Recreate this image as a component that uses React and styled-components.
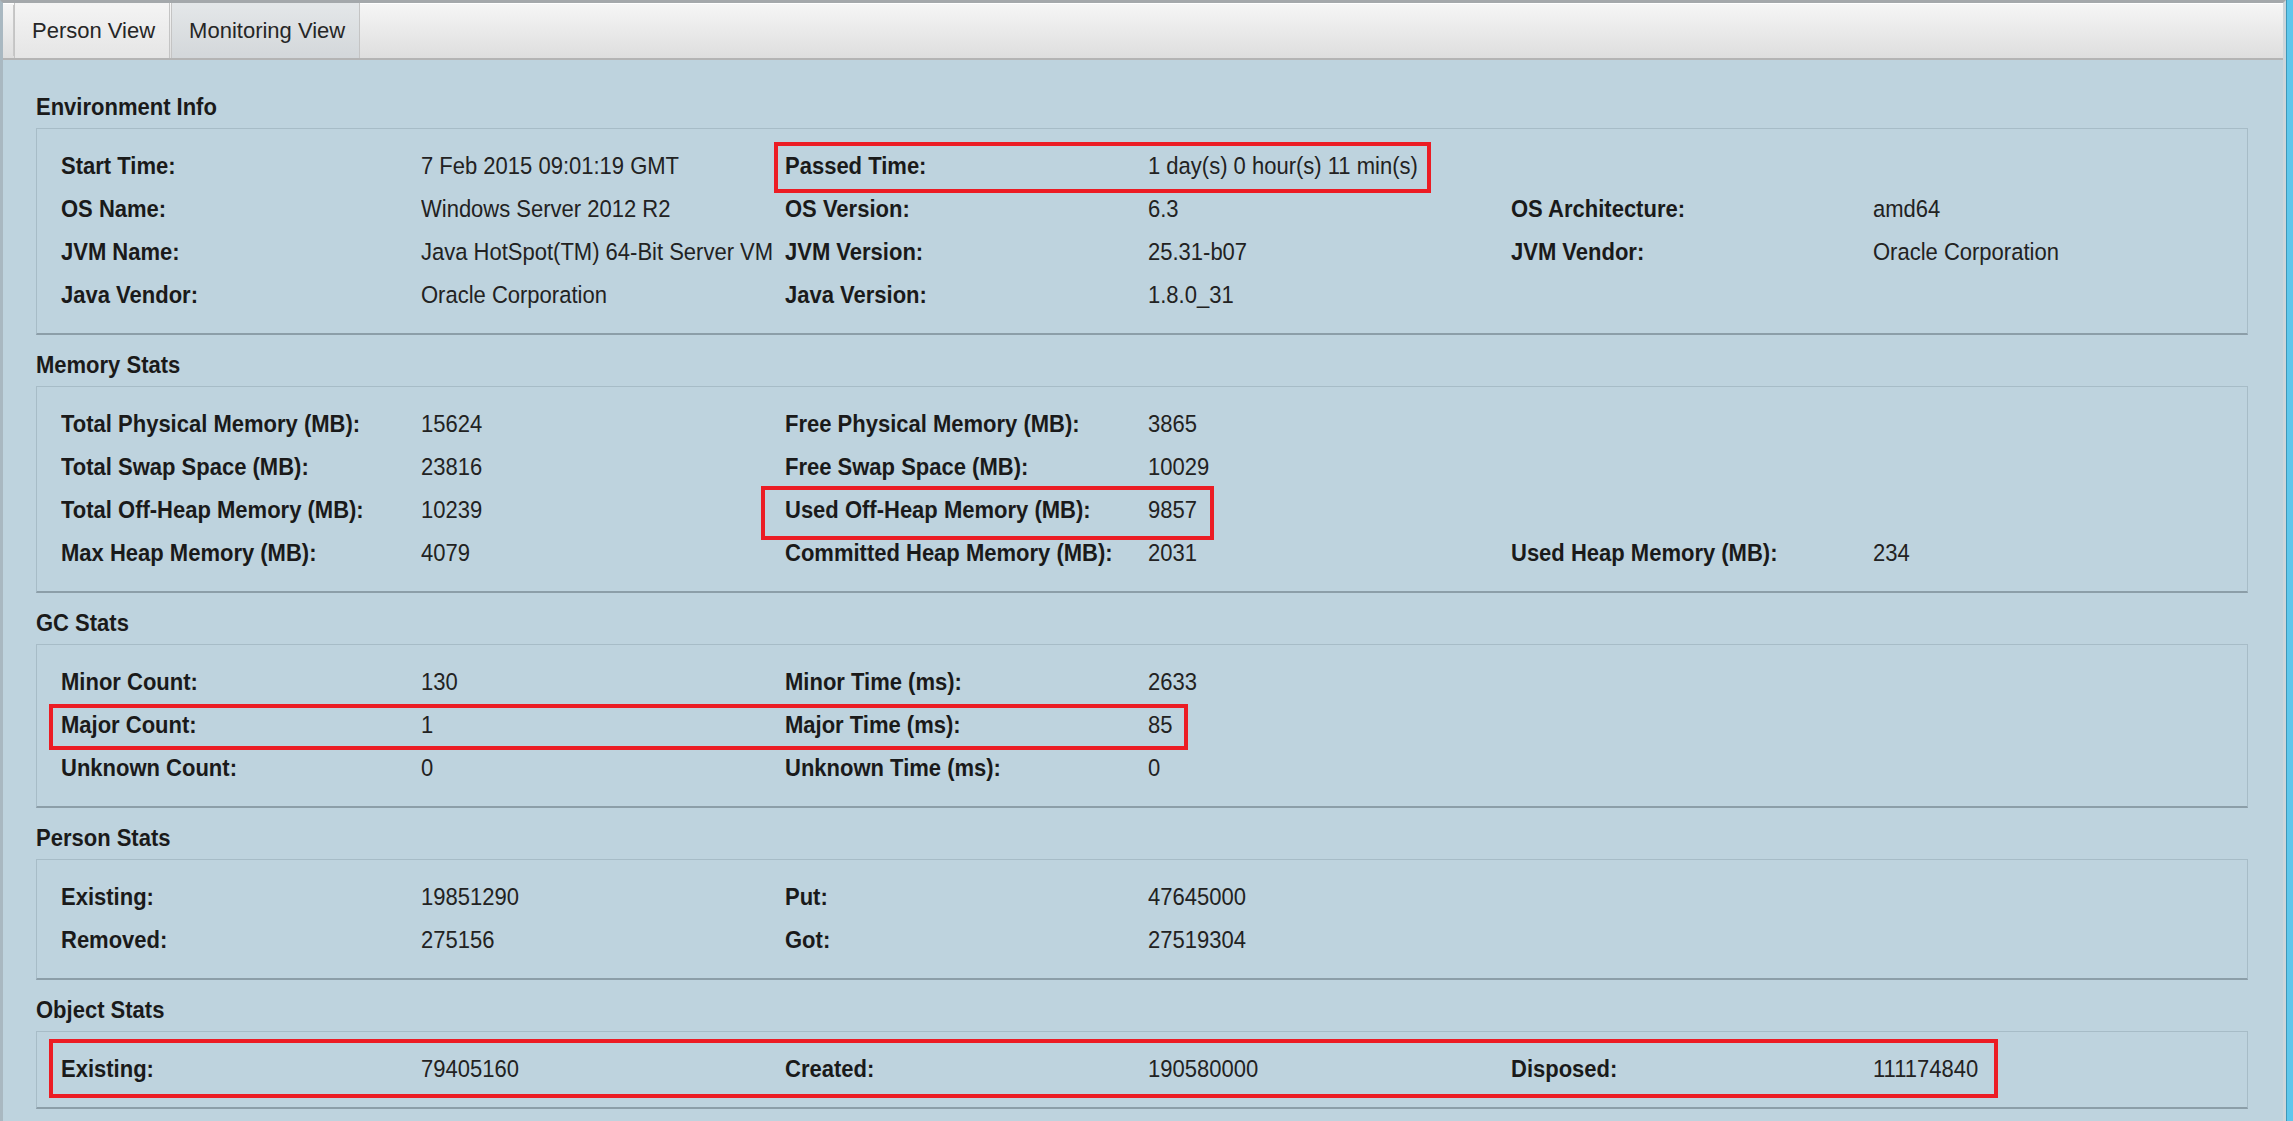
import styled, { createGlobalStyle } from "styled-components";

const GlobalStyle = createGlobalStyle`
  html, body {
    margin: 0;
    padding: 0;
    background: #bed3de;
  }
  body {
    font-family: "Liberation Sans", Arial, sans-serif;
    color: #1c1c1c;
  }
`;

const Janela = styled.div`
  display: flex;
  width: 2293px;
  height: 1121px;
  overflow: hidden;
`;

const Principal = styled.div`
  flex: 1;
  display: flex;
  flex-direction: column;
  background: #bed3de;
  border-left: 3px solid #a9b8c1;
  border-right: 3px solid #cdd6db;
  border-top: 3px solid #a4a8ab;
`;

const BordaJanela = styled.div`
  width: 7px;
  background: linear-gradient(to right, #3f97b8 0, #3f97b8 1px, #5ec7ec 1px);
`;

const BarraAbas = styled.div`
  height: 55px;
  display: flex;
  padding-left: 8px;
  background: linear-gradient(#f6f6f6, #dedede);
  border-bottom: 2px solid #b4b4b4;
  box-shadow: inset 0 1px 0 #ffffff;
`;

const Aba = styled.div`
  display: flex;
  align-items: center;
  padding: 0 14px 0 17px;
  font-size: 22px;
  color: #262626;
  border-left: 1px solid #c4c4c4;
  border-right: 1px solid #c4c4c4;
  margin-right: 1px;
  background: ${(p) =>
    p.$ativa
      ? "linear-gradient(#e4e7e9, #d3d7da)"
      : "linear-gradient(#f4f4f4, #e5e5e5)"};
  &:first-child {
    margin-left: 3px;
    box-shadow: -3px 0 0 -2px #c8c8c8;
  }
`;

const Conteudo = styled.div`
  display: flex;
  flex-direction: column;
  gap: 18px;
  padding: 35px 35px 0 33px;
`;

const Secao = styled.section`
  display: flex;
  flex-direction: column;
`;

const TituloSecao = styled.div`
  font-size: 22px;
  font-weight: bold;
  line-height: 26px;
  height: 26px;
  margin-bottom: 7px;
  color: #1a1a1a;
  transform: scaleY(1.07);
  transform-origin: left center;
`;

const Painel = styled.div`
  border: 1px solid #a7bcc7;
  border-bottom: 2px solid #8c9ea8;
  padding: 16px 0 16px 24px;
`;

const Linha = styled.div`
  position: relative;
  display: grid;
  grid-template-columns: 360px 364px 363px 363px 362px 1fr;
  height: 43px;
  align-items: center;
`;

const Rotulo = styled.span`
  justify-self: start;
  display: inline-block;
  font-size: 22px;
  font-weight: bold;
  color: #1a1a1a;
  white-space: nowrap;
  transform: scaleY(1.07);
`;

const Valor = styled.span`
  justify-self: start;
  display: inline-block;
  font-size: 22px;
  color: #222;
  white-space: nowrap;
  transform: scaleY(1.07);
`;

const Destaque = styled.div`
  position: absolute;
  left: ${(p) => p.$x}px;
  top: ${(p) => p.$y}px;
  width: ${(p) => p.$w}px;
  height: ${(p) => p.$h}px;
  border: 4px solid #ec1c24;
  box-sizing: border-box;
  pointer-events: none;
`;

const secoes = [
  {
    titulo: "Environment Info",
    linhas: [
      {
        itens: [
          ["Start Time:", "7 Feb 2015 09:01:19 GMT"],
          ["Passed Time:", "1 day(s) 0 hour(s) 11 min(s)"],
        ],
        destaque: { x: 713, y: -3, w: 657, h: 51 },
      },
      {
        itens: [
          ["OS Name:", "Windows Server 2012 R2"],
          ["OS Version:", "6.3"],
          ["OS Architecture:", "amd64"],
        ],
      },
      {
        itens: [
          ["JVM Name:", "Java HotSpot(TM) 64-Bit Server VM"],
          ["JVM Version:", "25.31-b07"],
          ["JVM Vendor:", "Oracle Corporation"],
        ],
      },
      {
        itens: [
          ["Java Vendor:", "Oracle Corporation"],
          ["Java Version:", "1.8.0_31"],
        ],
      },
    ],
  },
  {
    titulo: "Memory Stats",
    linhas: [
      {
        itens: [
          ["Total Physical Memory (MB):", "15624"],
          ["Free Physical Memory (MB):", "3865"],
        ],
      },
      {
        itens: [
          ["Total Swap Space (MB):", "23816"],
          ["Free Swap Space (MB):", "10029"],
        ],
      },
      {
        itens: [
          ["Total Off-Heap Memory (MB):", "10239"],
          ["Used Off-Heap Memory (MB):", "9857"],
        ],
        destaque: { x: 700, y: -3, w: 453, h: 54 },
      },
      {
        itens: [
          ["Max Heap Memory (MB):", "4079"],
          ["Committed Heap Memory (MB):", "2031"],
          ["Used Heap Memory (MB):", "234"],
        ],
      },
    ],
  },
  {
    titulo: "GC Stats",
    linhas: [
      {
        itens: [
          ["Minor Count:", "130"],
          ["Minor Time (ms):", "2633"],
        ],
      },
      {
        itens: [
          ["Major Count:", "1"],
          ["Major Time (ms):", "85"],
        ],
        destaque: { x: -12, y: 0, w: 1139, h: 46 },
      },
      {
        itens: [
          ["Unknown Count:", "0"],
          ["Unknown Time (ms):", "0"],
        ],
      },
    ],
  },
  {
    titulo: "Person Stats",
    linhas: [
      {
        itens: [
          ["Existing:", "19851290"],
          ["Put:", "47645000"],
        ],
      },
      {
        itens: [
          ["Removed:", "275156"],
          ["Got:", "27519304"],
        ],
      },
    ],
  },
  {
    titulo: "Object Stats",
    linhas: [
      {
        itens: [
          ["Existing:", "79405160"],
          ["Created:", "190580000"],
          ["Disposed:", "111174840"],
        ],
        destaque: { x: -12, y: -9, w: 1949, h: 59 },
      },
    ],
  },
];

const App = () => {
  return (
    <>
      <GlobalStyle />
      <Janela>
        <Principal>
          <BarraAbas>
            <Aba>Person View</Aba>
            <Aba $ativa>Monitoring View</Aba>
          </BarraAbas>

          <Conteudo>
            {secoes.map((secao) => (
              <Secao key={secao.titulo}>
                <TituloSecao>{secao.titulo}</TituloSecao>
                <Painel>
                  {secao.linhas.map((linha, i) => (
                    <Linha key={i}>
                      {linha.itens.map(([rotulo, valor]) => [
                        <Rotulo key={rotulo}>{rotulo}</Rotulo>,
                        <Valor key={rotulo + "-v"}>{valor}</Valor>,
                      ])}
                      {linha.destaque && (
                        <Destaque
                          $x={linha.destaque.x}
                          $y={linha.destaque.y}
                          $w={linha.destaque.w}
                          $h={linha.destaque.h}
                        />
                      )}
                    </Linha>
                  ))}
                </Painel>
              </Secao>
            ))}
          </Conteudo>
        </Principal>
        <BordaJanela />
      </Janela>
    </>
  );
};

export default App;
